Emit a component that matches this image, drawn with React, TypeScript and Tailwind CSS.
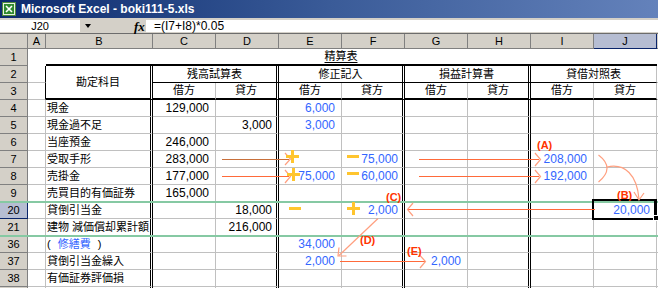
import React from "react";

type Row = {
  n: string;
  b?: React.ReactNode;
  c?: string;
  d?: string;
  e?: string;
  f?: string;
  g?: string;
  h?: string;
  i?: string;
  j?: string;
  sel?: boolean;
};

type ColKey = "c" | "d" | "e" | "f" | "g" | "h" | "i" | "j";

const COLS: { k: ColKey; dbl: boolean; blue: boolean }[] = [
  { k: "c", dbl: false, blue: false },
  { k: "d", dbl: true, blue: false },
  { k: "e", dbl: false, blue: true },
  { k: "f", dbl: true, blue: true },
  { k: "g", dbl: false, blue: true },
  { k: "h", dbl: true, blue: true },
  { k: "i", dbl: false, blue: true },
  { k: "j", dbl: false, blue: true },
];

const GROUPS = [
  { title: "残高試算表", dbl: true },
  { title: "修正記入", dbl: true },
  { title: "損益計算書", dbl: true },
  { title: "貸借対照表", dbl: false },
];

const ROWS: Row[] = [
  { n: "4", b: "現金", c: "129,000", e: "6,000" },
  { n: "5", b: "現金過不足", d: "3,000", e: "3,000" },
  { n: "6", b: "当座預金", c: "246,000" },
  { n: "7", b: "受取手形", c: "283,000", f: "75,000", i: "208,000" },
  { n: "8", b: "売掛金", c: "177,000", e: "75,000", f: "60,000", i: "192,000" },
  { n: "9", b: "売買目的有価証券", c: "165,000" },
  { n: "20", b: "貸倒引当金", d: "18,000", f: "2,000", j: "20,000", sel: true },
  { n: "21", b: "建物 減価償却累計額", d: "216,000" },
  {
    n: "36",
    b: (
      <>
        (<span className="ml-[7px] text-[#3366ff]">修繕費</span>
        <span className="ml-[7px]">)</span>
      </>
    ),
    e: "34,000",
  },
  { n: "37", b: "貸倒引当金繰入", e: "2,000", g: "2,000" },
  { n: "38", b: "有価証券評価損" },
  { n: "" },
];

const HEADS = ["A", "B", "C", "D", "E", "F", "G", "H", "I", "J", ""];
const HEAD_W = [
  "w-[18px]",
  "w-[107px]",
  "w-[63px]",
  "w-[63px]",
  "w-[63px]",
  "w-[63px]",
  "w-[63px]",
  "w-[63px]",
  "w-[63px]",
  "w-[63px]",
  "w-[63px]",
];

const DBL_R = "border-r-[3px] [border-right-style:double] border-r-black";
const GRAY_R = "border-r border-r-[#c0c0c0]";

function RowHead({ n, sel }: { n: string; sel?: boolean }) {
  return (
    <div
      className={`w-[28px] h-[17px] shrink-0 border-r border-b flex items-center justify-center text-[11px] ${
        sel
          ? "bg-[#b6bdd2] border-[#0a246a] shadow-[inset_0_1px_0_#0a246a]"
          : "bg-[#d4d0c8] border-[#808080]"
      }`}
    >
      {n}
    </div>
  );
}

function ExcelIcon() {
  return (
    <svg width="14" height="14" viewBox="0 0 14 14">
      <rect x="0.5" y="0.5" width="13" height="13" fill="#e8f3e0" stroke="#4f8a3c" />
      <rect x="2" y="2" width="10" height="10" fill="#2f8a2f" />
      <path d="M4 4 L10 10 M10 4 L4 10" stroke="#fff" strokeWidth="1.6" />
    </svg>
  );
}

function Plus({ x, y }: { x: number; y: number }) {
  return (
    <g fill="#ffc52e">
      <rect x={x} y={y + 5} width="13" height="3" />
      <rect x={x + 5} y={y} width="3" height="13" />
    </g>
  );
}

function Minus({ x, y }: { x: number; y: number }) {
  return <rect x={x} y={y} width="12" height="3" fill="#ffc52e" />;
}

function Label({ text, className }: { text: string; className: string }) {
  return (
    <span
      className={`absolute text-[11px] leading-[12px] font-bold text-[#ff3300] ${className}`}
    >
      {text}
    </span>
  );
}

export default function App() {
  return (
    <div className="relative w-[658px] h-[288px] overflow-hidden bg-white text-black font-['Liberation_Sans','Noto_Sans_CJK_JP',sans-serif]">
      {/* title bar */}
      <div className="h-[18px] flex items-center gap-[5px] pl-[2px] bg-gradient-to-r from-[#0c2b6e] via-[#3a5b98] to-[#6482bb]">
        <ExcelIcon />
        <span className="text-white font-bold text-[12px] leading-none">
          Microsoft Excel - boki111-5.xls
        </span>
      </div>

      {/* formula bar */}
      <div className="h-[15px] flex items-start pt-[2px] bg-[#d4d0c8]">
        <div className="w-[80px] h-[12px] bg-white flex items-center justify-center text-[11px] leading-none">
          J20
        </div>
        <div className="w-[54px] h-[12px] flex items-center pl-[5px]">
          <div className="w-0 h-0 border-l-[3.5px] border-r-[3.5px] border-t-[4px] border-l-transparent border-r-transparent border-t-black" />
        </div>
        <div className="w-[11px] h-[12px] flex items-center font-['Liberation_Serif',serif] italic font-bold text-[13px] leading-none">
          fx
        </div>
        <div className="flex-1 h-[12px] ml-[1px] bg-white flex items-center pl-[8px] text-[12px] leading-none">
          =(I7+I8)*0.05
        </div>
      </div>

      {/* column headers */}
      <div className="flex h-[16px] border-t border-t-[#6c6c6c] bg-[#d4d0c8]">
        <div className="w-[28px] h-[15px] shrink-0 border-r border-b border-[#808080]" />
        {HEADS.map((h, idx) => (
          <div
            key={idx}
            className={`${HEAD_W[idx]} h-[15px] shrink-0 border-r border-b flex items-center justify-center text-[11px] leading-none ${
              h === "J" ? "bg-[#b6bdd2] border-[#0a246a]" : "border-[#808080]"
            }`}
          >
            {h}
          </div>
        ))}
      </div>

      {/* row 1 */}
      <div className="flex h-[17px]">
        <RowHead n="1" />
        <div className="w-[18px] h-[17px] shrink-0" />
        <div className="w-[611px] h-[17px] shrink-0 border-b-2 border-b-black flex items-center pl-[232px]">
          <span className="w-[126px] text-center text-[11px] underline underline-offset-2">精算表</span>
        </div>
        <div className="w-[63px] h-[17px] shrink-0" />
      </div>

      {/* rows 2-3 header */}
      <div className="flex h-[34px]">
        <div className="flex flex-col shrink-0">
          <RowHead n="2" />
          <RowHead n="3" />
        </div>
        <div className="flex flex-col shrink-0">
          <div className="w-[18px] h-[17px] border-r border-r-black border-b border-b-[#c0c0c0]" />
          <div className="w-[18px] h-[17px] border-r border-r-black border-b border-b-[#c0c0c0]" />
        </div>
        <div
          className={`w-[107px] h-[34px] shrink-0 ${DBL_R} border-b-2 border-b-black flex items-center justify-center text-[11px]`}
        >
          勘定科目
        </div>
        {GROUPS.map((g) => (
          <div key={g.title} className="flex flex-col shrink-0">
            <div
              className={`w-[126px] h-[17px] ${g.dbl ? DBL_R : GRAY_R} border-b border-b-black flex items-center justify-center text-[11px]`}
            >
              {g.title}
            </div>
            <div className="flex">
              <div className={`w-[63px] h-[17px] ${GRAY_R} border-b-2 border-b-black flex items-center justify-center text-[11px]`}>
                借方
              </div>
              <div
                className={`w-[63px] h-[17px] ${g.dbl ? DBL_R : GRAY_R} border-b-2 border-b-black flex items-center justify-center text-[11px]`}
              >
                貸方
              </div>
            </div>
          </div>
        ))}
        <div className="flex flex-col shrink-0">
          <div className="w-[63px] h-[17px] border-r border-b border-[#c0c0c0]" />
          <div className="w-[63px] h-[17px] border-r border-b border-[#c0c0c0]" />
        </div>
      </div>

      {/* body rows */}
      {ROWS.map((r, idx) => (
        <div key={idx} className="flex h-[17px]">
          <RowHead n={r.n} sel={r.sel} />
          <div className="w-[18px] h-[17px] shrink-0 border-r border-b border-[#c0c0c0]" />
          <div
            className={`w-[107px] h-[17px] shrink-0 ${DBL_R} border-b border-b-[#c0c0c0] flex items-center pl-[1px] text-[11px] whitespace-nowrap overflow-hidden`}
          >
            {r.b}
          </div>
          {COLS.map((col) => (
            <div
              key={col.k}
              className={`w-[63px] h-[17px] shrink-0 border-b border-b-[#c0c0c0] flex items-center justify-end text-[12px] ${
                col.dbl ? `${DBL_R} pr-[4px]` : `${GRAY_R} pr-[6px]`
              } ${col.blue ? "text-[#3366ff]" : "text-black"}`}
            >
              {r[col.k]}
            </div>
          ))}
          <div className="w-[63px] h-[17px] shrink-0 border-r border-b border-[#c0c0c0]" />
        </div>
      ))}

      {/* green break lines */}
      <div className="absolute left-0 top-[201px] w-[658px] h-[2px] bg-[#86c9a3]" />
      <div className="absolute left-0 top-[235px] w-[658px] h-[2px] bg-[#86c9a3]" />

      {/* selection J20 */}
      <div className="absolute left-[592px] top-[199px] w-[65px] h-[21px] border-2 border-r-[3px] border-black" />
      <div className="absolute left-[653px] top-[215px] w-[6px] h-[6px] bg-black border border-white" />

      {/* arrows & marks */}
      <svg
        className="absolute left-0 top-0 pointer-events-none"
        width="658"
        height="288"
        viewBox="0 0 658 288"
      >
        <g fill="none" strokeWidth="1.2">
          <line x1="222" y1="159.5" x2="289" y2="159.5" stroke="#c8703c" />
          <polyline points="285,153 290.5,159 285,165" stroke="#ffa080" />
          <line x1="222" y1="176.5" x2="289" y2="176.5" stroke="#ff6a3a" />
          <polyline points="285,170 290.5,176.5 285,183" stroke="#ffa080" />

          <line x1="419" y1="159.5" x2="539" y2="159.5" stroke="#ff6a3a" />
          <polyline points="535,153 540.5,159.5 535,166" stroke="#ffa080" />
          <line x1="419" y1="176.5" x2="539" y2="176.5" stroke="#ff6a3a" />
          <polyline points="535,170 540.5,176.5 535,183" stroke="#ffa080" />

          <line x1="408" y1="209.5" x2="595" y2="209.5" stroke="#ff6a3a" />
          <polyline points="413,203 407.5,209.5 413,216" stroke="#ffa080" />

          <line x1="340" y1="261.5" x2="425" y2="261.5" stroke="#ff6a3a" />
          <polyline points="420,255.5 425.5,261.5 420,268" stroke="#ffa080" />

          <line x1="378" y1="218.5" x2="339" y2="255.5" stroke="#ff9f7f" />
          <polyline points="339,247.5 338,256 346.5,256" stroke="#ffa080" />

          <path d="M598.5,155 Q615.5,168 598.5,182" stroke="#ffa080" />
          <path d="M607,167 C625,163 637,175 639,199" stroke="#ffa080" />
          <polyline points="634,192 639,200 644,193" stroke="#ffa080" />
        </g>

        <Plus x={286} y={150} />
        <Plus x={287} y={168} />
        <Minus x={347} y={155} />
        <Minus x={347} y={172} />
        <Minus x={289} y={207} />
        <Plus x={347} y={202} />
      </svg>

      <Label text="(A)" className="left-[537px] top-[139px]" />
      <Label text="(B)" className="left-[617px] top-[189px]" />
      <Label text="(C)" className="left-[386px] top-[191px]" />
      <Label text="(D)" className="left-[360px] top-[234px]" />
      <Label text="(E)" className="left-[407px] top-[245px]" />
    </div>
  );
}
